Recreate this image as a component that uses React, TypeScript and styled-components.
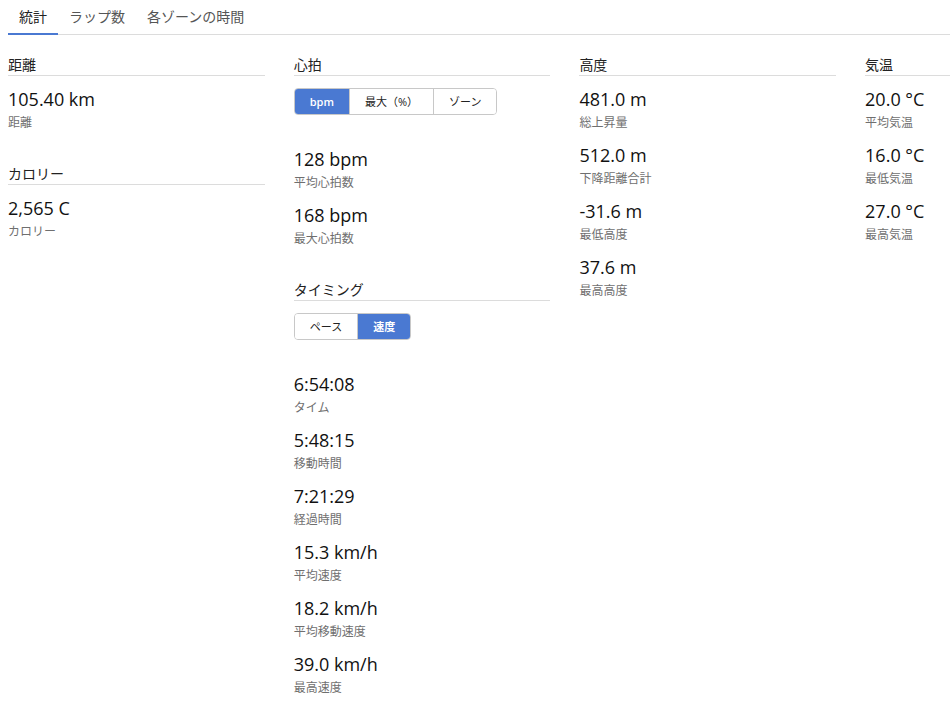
import React, { useState } from 'react';
import styled, { createGlobalStyle } from 'styled-components';

const GlobalStyle = createGlobalStyle`
    html, body {
        margin: 0;
        padding: 0;
        background: #fff;
    }
    body {
        font-family: 'Open Sans', 'Noto Sans CJK JP', sans-serif;
        color: #222;
    }
`;

const Page = styled.div`
    padding: 0 0 0 8px;
    overflow: hidden;
`;

const TabBar = styled.div`
    display: flex;
    height: 35px;
    box-sizing: border-box;
    border-bottom: 1px solid #dcdcdc;
`;

const Tab = styled.div<{ $active?: boolean }>`
    height: 35px;
    box-sizing: border-box;
    margin-bottom: -1px;
    padding: 0 11px;
    line-height: 33px;
    font-size: 14px;
    color: ${(p) => (p.$active ? '#222' : '#555')};
    border-bottom: 2px solid ${(p) => (p.$active ? '#4a79d2' : 'transparent')};
    cursor: pointer;
`;

const Kolonner = styled.div`
    display: grid;
    grid-template-columns: repeat(4, 256.7px);
    column-gap: 29px;
    align-items: start;
    margin-top: 20px;
`;

const Kolonne = styled.div`
    display: flex;
    flex-direction: column;
    gap: 33px;
`;

const Seksjon = styled.section``;

const Overskrift = styled.div`
    font-size: 14px;
    line-height: 20px;
    color: #222;
    border-bottom: 1px solid #dcdcdc;
`;

const Knapper = styled.div`
    display: flex;
    width: max-content;
    margin: 12px 0 32px;
    border: 1px solid #c8c8c8;
    border-radius: 4px;
    overflow: hidden;
`;

const Knapp = styled.button<{ $active?: boolean }>`
    font-family: 'Open Sans', 'Noto Sans CJK JP', sans-serif;
    font-size: 11px;
    line-height: 25px;
    height: 25px;
    padding: 0 15px;
    border: none;
    border-left: 1px solid #c8c8c8;
    background: ${(p) => (p.$active ? '#4a79d2' : '#fff')};
    color: ${(p) => (p.$active ? '#fff' : '#222')};
    font-weight: ${(p) => (p.$active ? 600 : 400)};
    cursor: pointer;
    &:first-child {
        border-left: none;
    }
`;

const Verdier = styled.div<{ $utenKnapper?: boolean }>`
    display: flex;
    flex-direction: column;
    gap: 12px;
    margin-top: ${(p) => (p.$utenKnapper ? '11px' : '0')};
`;

const Verdi = styled.div`
    display: flex;
    flex-direction: column;
    gap: 4px;
`;

const Tall = styled.div`
    font-size: 18px;
    line-height: 24px;
    color: #111;
`;

const Etikett = styled.div`
    font-size: 12px;
    line-height: 16px;
    color: #6f6f6f;
`;

interface Stat {
    verdi: string;
    etikett: string;
}

interface SeksjonProps {
    tittel: string;
    stats: Stat[];
    knapper?: string[];
    startAktiv?: number;
}

const StatSeksjon: React.FC<SeksjonProps> = ({ tittel, stats, knapper, startAktiv = 0 }) => {
    const [aktiv, settAktiv] = useState(startAktiv);
    return (
        <Seksjon>
            <Overskrift>{tittel}</Overskrift>
            {knapper && (
                <Knapper>
                    {knapper.map((k, i) => (
                        <Knapp key={k} $active={i === aktiv} onClick={() => settAktiv(i)}>
                            {k}
                        </Knapp>
                    ))}
                </Knapper>
            )}
            <Verdier $utenKnapper={!knapper}>
                {stats.map((s) => (
                    <Verdi key={s.etikett}>
                        <Tall>{s.verdi}</Tall>
                        <Etikett>{s.etikett}</Etikett>
                    </Verdi>
                ))}
            </Verdier>
        </Seksjon>
    );
};

const App: React.FC = () => {
    const [fane, settFane] = useState(0);
    const faner = ['統計', 'ラップ数', '各ゾーンの時間'];

    return (
        <Page>
            <GlobalStyle />
            <TabBar>
                {faner.map((f, i) => (
                    <Tab key={f} $active={i === fane} onClick={() => settFane(i)}>
                        {f}
                    </Tab>
                ))}
            </TabBar>
            <Kolonner>
                <Kolonne>
                    <StatSeksjon tittel="距離" stats={[{ verdi: '105.40 km', etikett: '距離' }]} />
                    <StatSeksjon tittel="カロリー" stats={[{ verdi: '2,565 C', etikett: 'カロリー' }]} />
                </Kolonne>
                <Kolonne>
                    <StatSeksjon
                        tittel="心拍"
                        knapper={['bpm', '最大（%）', 'ゾーン']}
                        stats={[
                            { verdi: '128 bpm', etikett: '平均心拍数' },
                            { verdi: '168 bpm', etikett: '最大心拍数' },
                        ]}
                    />
                    <StatSeksjon
                        tittel="タイミング"
                        knapper={['ペース', '速度']}
                        startAktiv={1}
                        stats={[
                            { verdi: '6:54:08', etikett: 'タイム' },
                            { verdi: '5:48:15', etikett: '移動時間' },
                            { verdi: '7:21:29', etikett: '経過時間' },
                            { verdi: '15.3 km/h', etikett: '平均速度' },
                            { verdi: '18.2 km/h', etikett: '平均移動速度' },
                            { verdi: '39.0 km/h', etikett: '最高速度' },
                        ]}
                    />
                </Kolonne>
                <Kolonne>
                    <StatSeksjon
                        tittel="高度"
                        stats={[
                            { verdi: '481.0 m', etikett: '総上昇量' },
                            { verdi: '512.0 m', etikett: '下降距離合計' },
                            { verdi: '-31.6 m', etikett: '最低高度' },
                            { verdi: '37.6 m', etikett: '最高高度' },
                        ]}
                    />
                </Kolonne>
                <Kolonne>
                    <StatSeksjon
                        tittel="気温"
                        stats={[
                            { verdi: '20.0 °C', etikett: '平均気温' },
                            { verdi: '16.0 °C', etikett: '最低気温' },
                            { verdi: '27.0 °C', etikett: '最高気温' },
                        ]}
                    />
                </Kolonne>
            </Kolonner>
        </Page>
    );
};

export default App;
